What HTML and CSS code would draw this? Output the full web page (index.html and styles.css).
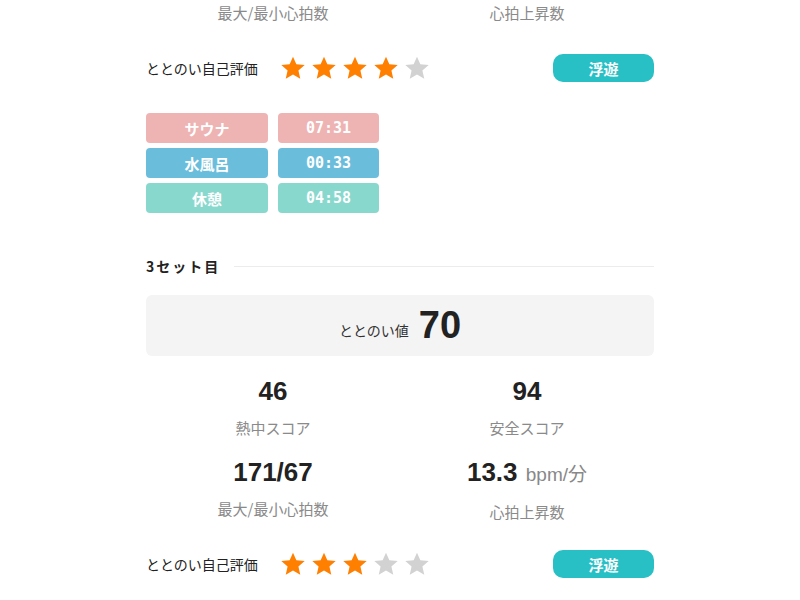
FILE: index.html
```html
<!DOCTYPE html>
<html lang="ja">
<head>
    <meta charset="utf-8">
    <meta name="viewport" content="width=device-width, initial-scale=1">
    <title>セット記録</title>
    <link rel="stylesheet" href="styles.css">
</head>
<body>
    <div class="page">
        <!-- 2セット目（続き） -->
        <div class="stats stats-top">
            <div class="stat"><div class="stat-label">最大/最小心拍数</div></div>
            <div class="stat"><div class="stat-label">心拍上昇数</div></div>
        </div>

        <div class="rating">
            <span class="rating-label">ととのい自己評価</span>
            <div class="stars">
                <svg class="star on" viewBox="0 0 24 24"><path d="M12 1.5l3.1 7.1 7.7.7-5.8 5.1 1.7 7.6L12 18l-6.7 4 1.7-7.6L1.2 9.3l7.7-.7z"/></svg>
                <svg class="star on" viewBox="0 0 24 24"><path d="M12 1.5l3.1 7.1 7.7.7-5.8 5.1 1.7 7.6L12 18l-6.7 4 1.7-7.6L1.2 9.3l7.7-.7z"/></svg>
                <svg class="star on" viewBox="0 0 24 24"><path d="M12 1.5l3.1 7.1 7.7.7-5.8 5.1 1.7 7.6L12 18l-6.7 4 1.7-7.6L1.2 9.3l7.7-.7z"/></svg>
                <svg class="star on" viewBox="0 0 24 24"><path d="M12 1.5l3.1 7.1 7.7.7-5.8 5.1 1.7 7.6L12 18l-6.7 4 1.7-7.6L1.2 9.3l7.7-.7z"/></svg>
                <svg class="star" viewBox="0 0 24 24"><path d="M12 1.5l3.1 7.1 7.7.7-5.8 5.1 1.7 7.6L12 18l-6.7 4 1.7-7.6L1.2 9.3l7.7-.7z"/></svg>
            </div>
            <span class="badge">浮遊</span>
        </div>

        <div class="timers">
            <div class="timer sauna">サウナ</div>
            <div class="timer time sauna">07:31</div>
            <div class="timer water">水風呂</div>
            <div class="timer time water">00:33</div>
            <div class="timer rest">休憩</div>
            <div class="timer time rest">04:58</div>
        </div>

        <!-- 3セット目 -->
        <div class="set-title">
            <span>3セット目</span>
            <div class="set-line"></div>
        </div>

        <div class="score-box">
            <span class="score-label">ととのい値</span>
            <span class="score-value">70</span>
        </div>

        <div class="stats">
            <div class="stat">
                <div class="stat-value">46</div>
                <div class="stat-label">熱中スコア</div>
            </div>
            <div class="stat">
                <div class="stat-value">94</div>
                <div class="stat-label">安全スコア</div>
            </div>
            <div class="stat">
                <div class="stat-value">171/67</div>
                <div class="stat-label">最大/最小心拍数</div>
            </div>
            <div class="stat">
                <div class="stat-value">13.3 <span class="unit">bpm/分</span></div>
                <div class="stat-label">心拍上昇数</div>
            </div>
        </div>

        <div class="rating rating-last">
            <span class="rating-label">ととのい自己評価</span>
            <div class="stars">
                <svg class="star on" viewBox="0 0 24 24"><path d="M12 1.5l3.1 7.1 7.7.7-5.8 5.1 1.7 7.6L12 18l-6.7 4 1.7-7.6L1.2 9.3l7.7-.7z"/></svg>
                <svg class="star on" viewBox="0 0 24 24"><path d="M12 1.5l3.1 7.1 7.7.7-5.8 5.1 1.7 7.6L12 18l-6.7 4 1.7-7.6L1.2 9.3l7.7-.7z"/></svg>
                <svg class="star on" viewBox="0 0 24 24"><path d="M12 1.5l3.1 7.1 7.7.7-5.8 5.1 1.7 7.6L12 18l-6.7 4 1.7-7.6L1.2 9.3l7.7-.7z"/></svg>
                <svg class="star" viewBox="0 0 24 24"><path d="M12 1.5l3.1 7.1 7.7.7-5.8 5.1 1.7 7.6L12 18l-6.7 4 1.7-7.6L1.2 9.3l7.7-.7z"/></svg>
                <svg class="star" viewBox="0 0 24 24"><path d="M12 1.5l3.1 7.1 7.7.7-5.8 5.1 1.7 7.6L12 18l-6.7 4 1.7-7.6L1.2 9.3l7.7-.7z"/></svg>
            </div>
            <span class="badge">浮遊</span>
        </div>
    </div>
</body>
</html>
```

FILE: styles.css
```css
* {
    margin: 0;
    padding: 0;
    box-sizing: border-box;
}

body {
    font-family: "Liberation Sans", "Noto Sans CJK JP", sans-serif;
    background: #fff;
    color: #222;
}

.page {
    width: 508px;
    margin: 0 auto;
}

.stats {
    display: grid;
    grid-template-columns: 1fr 1fr;
    row-gap: 18px;
    margin-top: 20px;
}

.stats-top {
    margin-top: 2px;
}

.stat {
    text-align: center;
}

.stat-value {
    font-size: 26px;
    font-weight: 700;
    line-height: 30px;
    color: #222;
    margin-bottom: 11px;
}

.unit {
    font-size: 19px;
    font-weight: 400;
    color: #888;
    margin-left: 1px;
}

.stat-label {
    font-family: "Noto Sans CJK JP", sans-serif;
    font-size: 15px;
    line-height: 22px;
    color: #8a8a8a;
}

.rating {
    display: flex;
    align-items: center;
    height: 28px;
    margin-top: 30px;
}

.rating-last {
    margin-top: 27px;
}

.rating-label {
    font-family: "Noto Sans CJK JP", sans-serif;
    font-size: 14px;
    color: #222;
    width: 134px;
}

.stars {
    display: flex;
    gap: 5px;
}

.star {
    width: 26px;
    height: 26px;
    fill: #d2d2d2;
}

.star.on {
    fill: #ff7f00;
}

.badge {
    margin-left: auto;
    width: 101px;
    height: 28px;
    border-radius: 10px;
    background: #29c0c5;
    color: #fff;
    font-family: "Noto Sans CJK JP", sans-serif;
    font-size: 15px;
    font-weight: 700;
    display: flex;
    align-items: center;
    justify-content: center;
}

.timers {
    display: grid;
    grid-template-columns: 122px 101px;
    column-gap: 10px;
    row-gap: 5px;
    margin-top: 31px;
}

.timer {
    height: 30px;
    border-radius: 4px;
    color: #fff;
    font-family: "Noto Sans CJK JP", sans-serif;
    font-size: 15px;
    font-weight: 700;
    display: flex;
    align-items: center;
    justify-content: center;
}

.timer.time {
    font-family: "DejaVu Sans Mono", monospace;
    font-size: 15px;
}

.sauna {
    background: #eeb3b3;
}

.water {
    background: #6bbddc;
}

.rest {
    background: #89d8ce;
}

.set-title {
    display: flex;
    align-items: center;
    gap: 14px;
    margin-top: 43px;
    height: 20px;
    font-family: "Noto Sans CJK JP", sans-serif;
    font-size: 14px;
    font-weight: 700;
    letter-spacing: 2px;
}

.set-line {
    flex: 1;
    height: 1px;
    background: #ececec;
}

.score-box {
    margin-top: 19px;
    height: 61px;
    background: #f4f4f4;
    border-radius: 6px;
    display: flex;
    align-items: center;
    justify-content: center;
    gap: 10px;
}

.score-label {
    font-family: "Noto Sans CJK JP", sans-serif;
    font-size: 14px;
    color: #333;
    margin-top: 8px;
}

.score-value {
    font-size: 38px;
    font-weight: 700;
    color: #222;
}
```
